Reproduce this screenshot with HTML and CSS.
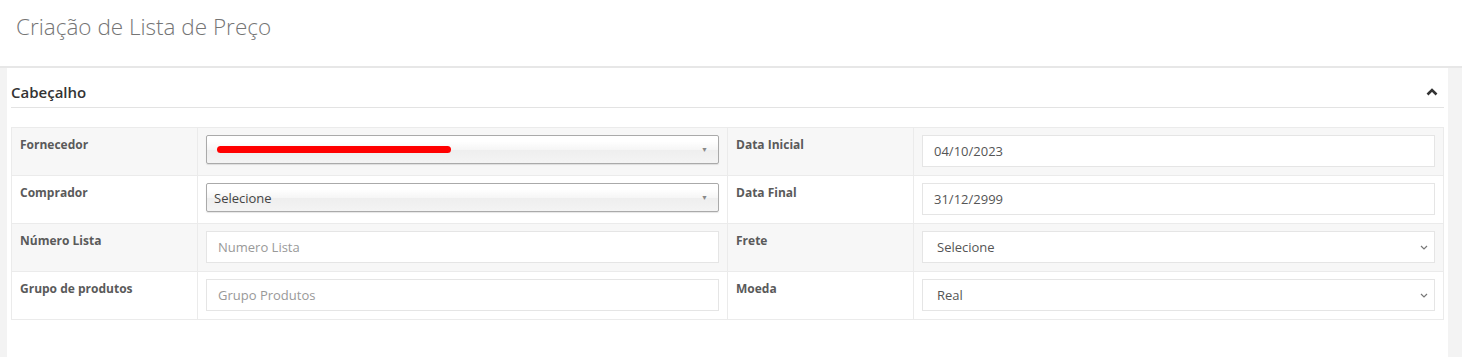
FILE: index.html
```html
<!DOCTYPE html>
<html lang="pt-BR">
<head>
    <meta charset="UTF-8">
    <title>Criação de Lista de Preço</title>
    <link rel="stylesheet" href="styles.css">
</head>
<body>

<header class="page-header">
    <h1>Criação de Lista de Preço</h1>
</header>

<div class="content">
    <div class="panel">
        <div class="panel-heading">
            <h2>Cabeçalho</h2>
            <svg class="collapse-icon" width="12" height="8" viewBox="0 0 12 8">
                <polyline points="1.5,6.5 6,2 10.5,6.5" fill="none" stroke="#333" stroke-width="2.6"/>
            </svg>
        </div>

        <table class="form-table">
            <colgroup>
                <col class="col-label">
                <col class="col-field">
                <col class="col-label">
                <col class="col-field">
            </colgroup>
            <tr class="striped">
                <th>Fornecedor</th>
                <td>
                    <div class="chosen">
                        <span class="redacted"></span>
                        <span class="chosen-arrow">&#9660;</span>
                    </div>
                </td>
                <th>Data Inicial</th>
                <td><input type="text" class="form-control" value="04/10/2023"></td>
            </tr>
            <tr>
                <th>Comprador</th>
                <td>
                    <div class="chosen">
                        <span>Selecione</span>
                        <span class="chosen-arrow">&#9660;</span>
                    </div>
                </td>
                <th>Data Final</th>
                <td><input type="text" class="form-control" value="31/12/2999"></td>
            </tr>
            <tr class="striped">
                <th>Número Lista</th>
                <td><input type="text" class="form-control" placeholder="Numero Lista"></td>
                <th>Frete</th>
                <td>
                    <div class="select-wrap">
                        <select class="form-control">
                            <option>Selecione</option>
                        </select>
                        <svg class="select-caret" width="8" height="5" viewBox="0 0 8 5">
                            <polyline points="1,1 4,4 7,1" fill="none" stroke="#777" stroke-width="1.2"/>
                        </svg>
                    </div>
                </td>
            </tr>
            <tr>
                <th>Grupo de produtos</th>
                <td><input type="text" class="form-control" placeholder="Grupo Produtos"></td>
                <th>Moeda</th>
                <td>
                    <div class="select-wrap">
                        <select class="form-control">
                            <option>Real</option>
                        </select>
                        <svg class="select-caret" width="8" height="5" viewBox="0 0 8 5">
                            <polyline points="1,1 4,4 7,1" fill="none" stroke="#777" stroke-width="1.2"/>
                        </svg>
                    </div>
                </td>
            </tr>
        </table>
    </div>
</div>

</body>
</html>
```

FILE: styles.css
```css
body {
    font-family: 'Open Sans', 'Liberation Sans', sans-serif;
    background-color: #f3f3f3;
    margin: 0;
    padding: 0;
    color: #555;
    font-size: 13px;
}
.page-header {
    background-color: white;
    height: 66px;
    border-bottom: 2px solid #e7e7e7;
    display: flex;
    align-items: center;
    padding-left: 16px;
}
.page-header h1 {
    margin: 0 0 14px 0;
    font-size: 22.5px;
    font-weight: 300;
    color: #757575;
}
.content {
    padding: 0 14px 0 7px;
}
.panel {
    background-color: white;
    padding: 0 4px 40px 4px;
    min-height: 289px;
    box-sizing: border-box;
}
.panel-heading {
    display: flex;
    align-items: center;
    justify-content: space-between;
    height: 39px;
    border-bottom: 1px solid #e3e3e3;
    margin-bottom: 19px;
}
.panel-heading h2 {
    margin: 8px 0 0 0;
    font-size: 15px;
    font-weight: 600;
    color: #333;
}
.collapse-icon {
    margin: 8px 6px 0 0;
}
.form-table {
    width: 100%;
    border-collapse: collapse;
    table-layout: fixed;
    border: 1px solid #ebebeb;
}
.col-label {
    width: 186px;
}
.form-table th,
.form-table td {
    border: 1px solid #ebebeb;
    padding: 7px 8px 8px 8px;
    vertical-align: top;
    text-align: left;
}
.form-table th {
    font-size: 12px;
    font-weight: 700;
    color: #5a5a5a;
    line-height: 20px;
    padding-top: 7px;
}
.form-table tr.striped {
    background-color: #f7f7f7;
}
.form-control {
    display: block;
    width: 100%;
    box-sizing: border-box;
    height: 32px;
    padding: 0 11px;
    border: 1px solid #e5e5e5;
    background-color: white;
    font-family: 'Open Sans', 'Liberation Sans', sans-serif;
    font-size: 13px;
    color: #555;
    border-radius: 0;
    outline: none;
}
.form-control::placeholder {
    color: #999;
}
.select-wrap {
    position: relative;
}
.select-wrap select {
    appearance: none;
    -webkit-appearance: none;
    padding-left: 14px;
}
.select-caret {
    position: absolute;
    right: 7px;
    top: 14px;
}
.chosen {
    display: flex;
    align-items: center;
    justify-content: space-between;
    height: 29px;
    box-sizing: border-box;
    padding: 0 10px 0 7px;
    border: 1px solid #aaa;
    border-radius: 2px;
    background: linear-gradient(#fff 20%, #f6f6f6 50%, #eee 52%, #f4f4f4 100%);
    box-shadow: 0 1px 1px rgba(0, 0, 0, 0.1);
    color: #444;
    font-size: 13px;
}
.chosen-arrow {
    font-size: 7px;
    color: #888;
}
.redacted {
    display: block;
    width: 234px;
    height: 7px;
    margin-left: 3px;
    background-color: #ff0000;
    border-radius: 4px;
}
```
